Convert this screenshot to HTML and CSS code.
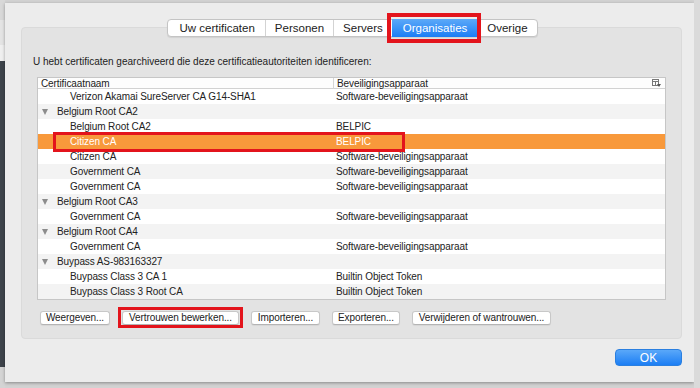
FILE: index.html
```html
<!DOCTYPE html>
<html>
<head>
  <link rel="stylesheet" href="styles.css">
</head>
<body>
  <div class="screen">
    <div class="backdrop-left"></div>

    <div class="dialog">
      <div class="tabs">
        <div class="tab">Uw certificaten</div>
        <div class="tab">Personen</div>
        <div class="tab">Servers</div>
        <div class="tab selected marked">Organisaties</div>
        <div class="tab">Overige</div>
      </div>

      <div class="group">
        <div class="intro">U hebt certificaten gearchiveerd die deze certificatieautoriteiten identificeren:</div>

        <div class="tree">
          <div class="tree-head">
            <div class="head-cell">Certificaatnaam</div>
            <div class="head-cell">
              Beveiligingsapparaat
              <svg class="column-picker" width="9" height="8" viewBox="0 0 9 8">
                <rect x="0.5" y="0.5" width="6" height="6" fill="none" stroke="#777"/>
                <line x1="0.5" y1="2.5" x2="6.5" y2="2.5" stroke="#777"/>
                <line x1="3.5" y1="2.5" x2="3.5" y2="6.5" stroke="#777"/>
                <polygon points="5,5 9,5 7,8" fill="#555"/>
              </svg>
            </div>
          </div>

          <div class="row"><div class="cell name child">Verizon Akamai SureServer CA G14-SHA1</div><div class="cell">Software-beveiligingsapparaat</div></div>
          <div class="row"><div class="cell name parent"><span class="disclosure"></span>Belgium Root CA2</div><div class="cell"></div></div>
          <div class="row"><div class="cell name child">Belgium Root CA2</div><div class="cell">BELPIC</div></div>
          <div class="row selected">
            <div class="cell name child">Citizen CA</div><div class="cell">BELPIC</div>
            <div class="row-mark"></div>
          </div>
          <div class="row"><div class="cell name child">Citizen CA</div><div class="cell">Software-beveiligingsapparaat</div></div>
          <div class="row"><div class="cell name child">Government CA</div><div class="cell">Software-beveiligingsapparaat</div></div>
          <div class="row"><div class="cell name child">Government CA</div><div class="cell">Software-beveiligingsapparaat</div></div>
          <div class="row"><div class="cell name parent"><span class="disclosure"></span>Belgium Root CA3</div><div class="cell"></div></div>
          <div class="row"><div class="cell name child">Government CA</div><div class="cell">Software-beveiligingsapparaat</div></div>
          <div class="row"><div class="cell name parent"><span class="disclosure"></span>Belgium Root CA4</div><div class="cell"></div></div>
          <div class="row"><div class="cell name child">Government CA</div><div class="cell">Software-beveiligingsapparaat</div></div>
          <div class="row"><div class="cell name parent"><span class="disclosure"></span>Buypass AS-983163327</div><div class="cell"></div></div>
          <div class="row"><div class="cell name child">Buypass Class 3 CA 1</div><div class="cell">Builtin Object Token</div></div>
          <div class="row"><div class="cell name child">Buypass Class 3 Root CA</div><div class="cell">Builtin Object Token</div></div>
        </div>

        <div class="actions">
          <button class="push w-view">Weergeven...</button>
          <button class="push w-trust marked">Vertrouwen bewerken...</button>
          <button class="push w-import">Importeren...</button>
          <button class="push w-export">Exporteren...</button>
          <button class="push w-remove">Verwijderen of wantrouwen...</button>
        </div>
      </div>

      <div class="footer">
        <button class="ok">OK</button>
      </div>
    </div>

    <div class="backdrop-right"></div>
  </div>
</body>
</html>
```

FILE: styles.css
```css
body {
  font-family: 'Liberation Sans', Arial, sans-serif;
  margin: 0;
  padding: 0;
  background-color: #d2d2d2;
  color: #222222;
  width: 700px;
  height: 388px;
  overflow: hidden;
}

.screen {
  display: flex;
  height: 388px;
}

.backdrop-left {
  width: 5px;
  flex-shrink: 0;
  background: linear-gradient(to bottom, #d8d8d8 0, #d8d8d8 20px, #e4e4e4 20px, #e4e4e4 45px, #efefef 45px, #efefef 61px, #3e444b 61px, #3e444b 367px, #d4d4d4 367px);
}

.backdrop-right {
  flex: 1;
  background-color: #dadada;
}

.dialog {
  width: 689px;
  height: 379px;
  margin-top: 3px;
  box-sizing: border-box;
  padding: 16px 12px 16px 16px;
  background-color: #ececec;
  box-shadow: 0 1px 3px rgba(0, 0, 0, 0.35);
  display: flex;
  flex-direction: column;
}

/* segmented control */
.tabs {
  position: relative;
  z-index: 1;
  align-self: center;
  display: flex;
  height: 18px;
  margin-bottom: -10px;
  margin-left: 2px;
  background-color: #ffffff;
  border: 1px solid #c4c4c4;
  border-radius: 4px;
  box-sizing: border-box;
  box-shadow: 0 1px 1px rgba(0, 0, 0, 0.08);
}

.tab {
  position: relative;
  font-size: 11.5px;
  line-height: 16px;
  padding: 0 9px;
  border-left: 1px solid #d3d3d3;
}

.tab:first-child {
  border-left: none;
  padding-left: 11px;
  padding-right: 10px;
}

.tab.selected {
  color: #ffffff;
  background: linear-gradient(to bottom, #5ca9f8, #1b7ef5);
  margin: -1px 0;
  line-height: 18px;
  border-left: none;
  padding: 0 11px;
}

.tab.selected + .tab {
  border-left: none;
}

.marked::after {
  content: '';
  position: absolute;
  border: 3px solid #e3141c;
  pointer-events: none;
}

.tab.marked::after {
  left: -5px;
  right: -3px;
  top: -6px;
  bottom: -6px;
  border-width: 4px;
}

/* group box */
.group {
  height: 312px;
  box-sizing: border-box;
  padding: 0 15px 0 15px;
  background-color: #e3e3e3;
  border: 1px solid #dadada;
  border-radius: 4px;
}

.intro {
  font-size: 10px;
  line-height: 14px;
  margin: 27px 0 8px -4px;
  white-space: nowrap;
}

.tree {
  background-color: #ffffff;
  border: 1px solid #c6c6c6;
}

.tree-head {
  display: grid;
  grid-template-columns: 295px 1fr;
  height: 10px;
  border-bottom: 1px solid #d2d2d2;
  background-color: #fdfdfd;
}

.head-cell {
  position: relative;
  font-size: 10px;
  line-height: 11px;
  padding-left: 3px;
  letter-spacing: -0.1px;
  white-space: nowrap;
}

.head-cell + .head-cell {
  border-left: 1px solid #d6d6d6;
}

.column-picker {
  position: absolute;
  right: 4px;
  top: 1px;
}

.row {
  position: relative;
  display: grid;
  grid-template-columns: 296px 1fr;
  height: 15px;
  font-size: 10px;
  letter-spacing: -0.1px;
  line-height: 15px;
  white-space: nowrap;
}

.row:nth-child(odd) {
  background-color: #f3f3f3;
}

.row.selected {
  background-color: #f8993b;
  color: #ffffff;
}

.cell {
  padding-left: 2px;
}

.cell.name {
  padding-left: 0;
}

.cell.child {
  padding-left: 32px;
}

.cell.parent {
  display: flex;
  align-items: center;
  padding-left: 4px;
}

.disclosure {
  width: 0;
  height: 0;
  margin-right: 9px;
  border-left: 3.5px solid transparent;
  border-right: 3.5px solid transparent;
  border-top: 6px solid #8c8c8c;
}

.row-mark {
  position: absolute;
  left: 15px;
  width: 352px;
  top: -2px;
  bottom: -3px;
  border: 3px solid #e3141c;
  box-sizing: border-box;
}

/* buttons */
.actions {
  display: flex;
  gap: 12px;
  margin-top: 11px;
  padding-left: 3px;
}

.push {
  position: relative;
  font-family: 'Liberation Sans', Arial, sans-serif;
  font-size: 10px;
  letter-spacing: -0.1px;
  line-height: 12px;
  height: 14px;
  padding: 0;
  white-space: nowrap;
  color: #222222;
  background-color: #ffffff;
  border: 1px solid #c8c8c8;
  border-bottom-color: #b4b4b4;
  border-radius: 3px;
  box-shadow: 0 1px 1px rgba(0, 0, 0, 0.06);
}

.w-view { width: 70px; }
.w-trust { width: 117px; }
.w-import { width: 69px; }
.w-export { width: 68px; }
.w-remove { width: 139px; }

.push.marked::after {
  left: -5px;
  right: -5px;
  top: -5px;
  bottom: -4px;
}

.footer {
  display: flex;
  justify-content: flex-end;
  margin-top: 10px;
}

.ok {
  width: 67px;
  height: 17px;
  padding: 0;
  font-family: 'Liberation Sans', Arial, sans-serif;
  font-size: 12px;
  color: #ffffff;
  background: linear-gradient(to bottom, #5aa8f9, #1c7ef4);
  border: 1px solid #2a7fe0;
  border-radius: 4px;
}
```
